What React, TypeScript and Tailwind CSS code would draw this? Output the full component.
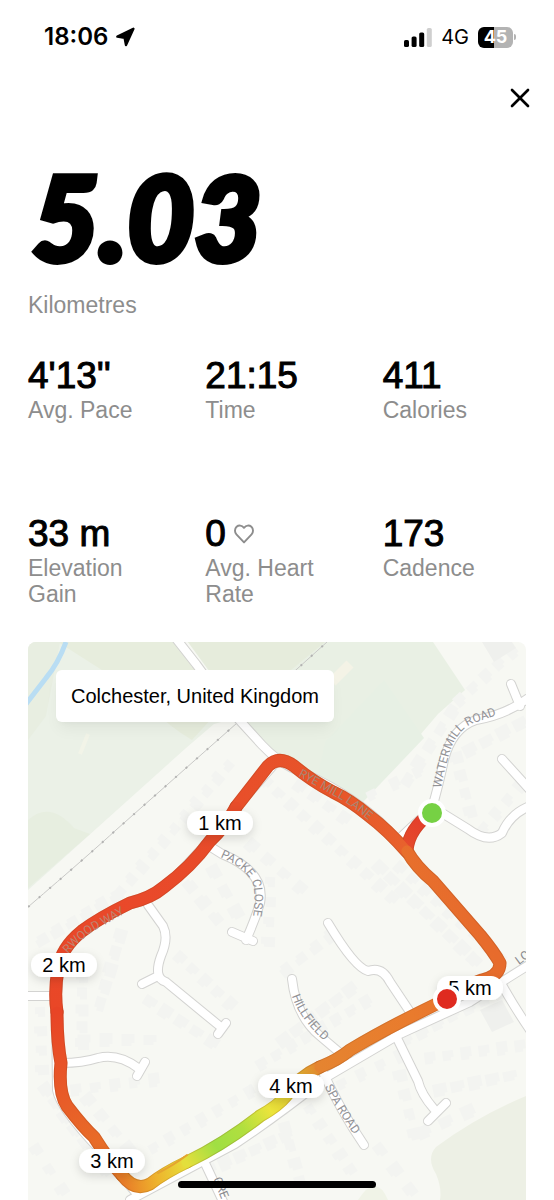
import { X } from "lucide-react";

interface Stat {
  value: string;
  label: string;
  heart?: boolean;
}

const STATS: Stat[] = [
  { value: "4'13''", label: "Avg. Pace" },
  { value: "21:15", label: "Time" },
  { value: "411", label: "Calories" },
  { value: "33 m", label: "Elevation Gain" },
  { value: "0", label: "Avg. Heart Rate", heart: true },
  { value: "173", label: "Cadence" },
];

const ROADS = [
  "M174 636 L196 664 Q228 708 242 723 L262 745 Q276 760 292 768 Q345 790 380 822 L408 851",
  "M278 760 L232 812 Q205 848 166 886 Q150 900 128 905 Q70 934 60 960 L56 1005 L57 1090 Q60 1108 100 1150 L137 1194",
  "M130 1200 L235 1144 Q280 1114 325 1078 L400 1034 L470 1002 Q520 970 560 946",
  "M396 842 Q412 826 424 816 M432 808 Q438 788 444 760 Q452 728 476 720 Q505 715 527 699 M511 684 L520 706",
  "M434 808 L468 829 Q488 844 502 833 Q510 814 530 806",
  "M502 759 L530 790",
  "M206 844 L222 854 Q266 872 260 903 Q255 920 246 940 M232 932 L253 941",
  "M148 905 L163 926 Q169 938 161 956 Q153 978 166 982 L222 1028 M226 1023 L218 1034 M142 984 L158 976",
  "M28 996 L56 996",
  "M62 1063 Q82 1063 98 1058 Q118 1053 138 1068 M145 1062 L137 1076",
  "M328 923 Q355 968 368 971 Q382 966 390 982 L410 1012",
  "M292 979 Q296 1016 320 1036 L346 1058",
  "M322 1070 Q340 1110 364 1145",
  "M394 1032 L418 1081 Q421 1094 434 1109 M428 1121 L446 1103",
  "M502 985 Q515 1008 530 1030",
  "M203 1159 L228 1212",
];

// Each row of houses runs from (x1, y1) to (x2, y2)
const HOUSE_ROWS = [
  [228, 766, 120, 892],
  [116, 896, 42, 940],
  [266, 782, 392, 898],
  [214, 872, 236, 912],
  [252, 846, 300, 888],
  [270, 882, 268, 942],
  [216, 918, 190, 886],
  [400, 868, 500, 958],
  [380, 868, 474, 960],
  [300, 786, 344, 818],
  [372, 795, 418, 772],
  [408, 780, 452, 712],
  [460, 700, 512, 652],
  [470, 750, 520, 724],
  [456, 758, 470, 812],
  [484, 828, 520, 786],
  [150, 1002, 212, 1042],
  [180, 958, 230, 1004],
  [120, 936, 100, 1004],
  [82, 960, 82, 1044],
  [40, 1012, 42, 1070],
  [84, 1040, 150, 1040],
  [76, 1090, 154, 1080],
  [46, 1090, 104, 1170],
  [88, 1100, 128, 1148],
  [154, 1148, 250, 1092],
  [210, 1170, 286, 1136],
  [262, 1064, 366, 1002],
  [284, 1040, 350, 990],
  [330, 936, 286, 970],
  [342, 1084, 400, 1056],
  [406, 1040, 500, 992],
  [430, 1058, 520, 1046],
  [440, 1090, 510, 1076],
  [400, 1076, 414, 1134],
  [310, 1110, 350, 1170],
  [380, 1150, 410, 1190],
  [36, 1150, 62, 1190],
  [424, 1132, 468, 1112],
  [280, 1110, 300, 1182],
];

const STREETS = [
  { id: "watermill", name: "WATERMILL ROAD", d: "M441 788 Q444 772 450 752 Q457 730 474 723 L512 710", color: "#929296" },
  { id: "rye", name: "RYE MILL LANE", d: "M298 776 L340 799 Q360 811 386 836", color: "#a98572" },
  { id: "packe", name: "PACKE CLOSE", d: "M220 857 Q246 868 253 884 Q257 900 251 928", color: "#929296" },
  { id: "wood", name: "RWOOD WAY", d: "M68 954 Q84 935 101 927 L136 907", color: "#c08470" },
  { id: "hillfield", name: "HILLFIELD", d: "M292 996 Q300 1022 335 1050", color: "#929296" },
  { id: "spa", name: "SPA ROAD", d: "M325 1087 Q336 1110 362 1146", color: "#929296" },
  { id: "london", name: "LO", d: "M519 965 L550 942", color: "#88888c" },
  { id: "crescent", name: "CRE", d: "M213 1179 L238 1240", color: "#88888c" },
];

// Pace colouring, one gradient for each stretch of the run
const LEGS = [
  {
    id: "start",
    d: "M431 813 Q409 829 407 850",
    box: [431, 813, 407, 850],
    stops: ["#e43a2b", "#e54c2c"],
  },
  {
    id: "lane",
    d: "M407 852 Q388 830 368 815 Q350 800 333 792 Q312 781 294 766 Q279 755 268 766 Q250 789 236 807",
    box: [407, 852, 236, 807],
    stops: ["#e8622d", "#e75529", "#e84f2a"],
  },
  {
    id: "way",
    d: "M236 807 Q226 826 210 841 Q191 867 164 887 Q151 898 130 903 Q99 918 82 931 Q61 948 58 969 Q54 992 57 1012",
    box: [236, 807, 57, 1012],
    stops: ["#e74c29", "#e9492a", "#e94727"],
  },
  {
    id: "west",
    d: "M57 1012 Q57 1042 61 1063 Q58 1092 67 1106 Q83 1127 94 1137 Q109 1161 122 1175",
    box: [57, 1012, 122, 1175],
    stops: ["#e84426", "#e85d28", "#e97827"],
  },
  {
    id: "corner",
    d: "M122 1175 Q135 1192 150 1184 Q164 1173 187 1162",
    box: [122, 1175, 187, 1162],
    stops: ["#e97d28", "#eeb32c", "#e6df3c"],
  },
  {
    id: "spa-west",
    d: "M187 1162 Q224 1144 260 1116 Q278 1106 286 1096 Q298 1077 320 1067",
    box: [187, 1162, 320, 1067],
    stops: ["#e3df3c", "#a0df43", "#b1df3f", "#ece43b", "#ddc32f", "#e58430"],
  },
  {
    id: "spa-east",
    d: "M320 1067 Q338 1060 350 1050 Q390 1026 447 999 Q467 985 482 980 Q500 976 500 963 Q494 952 480 935 L433 881 Q416 867 407 851",
    box: [320, 1067, 500, 963],
    stops: ["#e58430", "#e97b2d", "#e76b2c"],
  },
];

const MARKERS = [
  { label: "1 km", x: 220, y: 823 },
  { label: "2 km", x: 64, y: 965 },
  { label: "3 km", x: 112, y: 1161 },
  { label: "4 km", x: 291, y: 1086 },
  { label: "5 km", x: 470, y: 988 },
];

function StatusBar() {
  return (
    <header className="flex h-[74px] items-center justify-between pr-[38px] pl-11 font-['Inter',sans-serif]">
      <div className="flex items-center gap-2">
        <span className="text-[24px] leading-7 font-semibold">18:06</span>
        <svg viewBox="0 0 19 20" className="h-5 w-[19px]" aria-hidden="true">
          <path
            d="M17.4 1.8 L1.4 9.6 L8.6 10.8 L10 18 Z"
            fill="black"
            stroke="black"
            strokeWidth="2.4"
            strokeLinejoin="round"
          />
        </svg>
      </div>
      <div className="flex items-center">
        <svg viewBox="0 0 28 19" className="h-[19px] w-7" aria-hidden="true">
          <rect x="0" y="12" width="5" height="7" rx="1.6" />
          <rect x="7.6" y="8.5" width="5" height="10.5" rx="1.6" />
          <rect x="15.2" y="4.5" width="5" height="14.5" rx="1.6" />
          <rect x="22.8" y="0" width="5" height="19" rx="1.6" fill="#cfcfcf" />
        </svg>
        <span className="ml-[9px] text-[20px] leading-7">4G</span>
        <div className="ml-[9px] flex items-center gap-px">
          <span className="flex h-[21px] w-[35px] items-center justify-center rounded-md bg-linear-to-r from-black from-45% to-[#b3b3b3] to-45% text-[18px] leading-5 font-bold text-white">
            45
          </span>
          <span className="h-[6px] w-[2px] rounded-r-full bg-[#b3b3b3]" />
        </div>
      </div>
    </header>
  );
}

function StatItem({ value, label, heart }: Stat) {
  return (
    <div>
      <dd className="flex items-center gap-2 text-[37px] leading-10 [-webkit-text-stroke:1px_black]">
        {value}
        {heart && (
          <svg viewBox="0 0 20 20" className="h-5 w-5" aria-hidden="true">
            <path
              d="M10 18.4 L2.4 10.3 C0.4 8.2 0.6 4.7 2.6 2.8 C4.8 0.9 7.8 1.1 10 3.8 C12.2 1.1 15.2 0.9 17.4 2.8 C19.4 4.7 19.6 8.2 17.6 10.3 Z"
              fill="none"
              stroke="#8d8d8d"
              strokeWidth="1.9"
              strokeLinejoin="round"
            />
          </svg>
        )}
      </dd>
      <dt className="mt-px pr-4 text-[23px] leading-[26px] text-[#8d8d8d]">{label}</dt>
    </div>
  );
}

function Houses() {
  return (
    <g fill="#f3f4f1">
      {HOUSE_ROWS.map(([x1, y1, x2, y2], row) => {
        const length = Math.hypot(x2 - x1, y2 - y1);
        const count = Math.max(2, Math.round(length / 15));
        const angle = (Math.atan2(y2 - y1, x2 - x1) * 180) / Math.PI;
        return Array.from({ length: count }, (_, i) => {
          const t = i / (count - 1);
          const w = 10 + ((i * 5 + row * 3) % 5);
          const h = 10 + ((i * 3 + row) % 5);
          const x = x1 + (x2 - x1) * t;
          const y = y1 + (y2 - y1) * t;
          return (
            <path
              key={`${row}-${i}`}
              d={`M${-w / 2} ${-h / 2} h${w} v${h - 3} h-3 v3 h${3 - w} z`}
              transform={`translate(${x} ${y}) rotate(${angle})`}
            />
          );
        });
      })}
    </g>
  );
}

function RouteMap() {
  return (
    <svg
      viewBox="28 642 498 558"
      className="block w-full"
      role="img"
      aria-label="Map of the run"
    >
      <defs>
        {LEGS.map(({ id, box, stops }) => (
          <linearGradient
            key={id}
            id={id}
            gradientUnits="userSpaceOnUse"
            x1={box[0]}
            y1={box[1]}
            x2={box[2]}
            y2={box[3]}
          >
            {stops.map((color, i) => (
              <stop key={i} offset={i / (stops.length - 1)} stopColor={color} />
            ))}
          </linearGradient>
        ))}
        {STREETS.map(({ id, d }) => (
          <path key={id} id={`street-${id}`} d={d} />
        ))}
        <filter id="pill-shadow" x="-30%" y="-60%" width="160%" height="240%">
          <feDropShadow dx="0" dy="3" stdDeviation="5" floodOpacity="0.14" />
        </filter>
      </defs>

      <rect x="28" y="642" width="498" height="558" fill="#f7f8f3" />

      {/* fields */}
      <path d="M28 642 H178 L236 718 L214 724 L186 748 L28 890 Z" fill="#ebf1e7" />
      <path d="M58 642 H178 L224 705 L192 740 Q168 726 150 706 L105 672 Z" fill="#e7eddd" />
      <path d="M28 642 H60 L46 716 L28 740 Z" fill="#e8eee1" />
      <path d="M28 820 Q50 800 74 828 L90 834 L28 888 Z" fill="#e7eee0" />
      <path d="M188 642 H433 L465 690 L438 714 L362 803 L298 768 Q262 744 250 728 Z" fill="#e9f0e4" />
      <path d="M188 642 H325 L240 712 Z" fill="#e6ecdc" />
      <path d="M384 680 L424 738 L362 803 L318 775 L325 742 Z" fill="#e7f0e4" />
      <path d="M526 1096 Q478 1116 436 1147 Q426 1158 436 1174 Q442 1188 440 1200 H526 Z" fill="#edf0e5" />
      <path d="M358 1200 Q376 1172 388 1200 Z" fill="#f0f3e7" />
      <path d="M66 642 Q58 664 46 678 L26 704" fill="none" stroke="#b9ddf3" strokeWidth="5" />
      <path d="M88 734 L80 754" stroke="#f2f4e8" strokeWidth="4" />
      <path d="M332 682 L350 664" stroke="#f4f3e6" strokeWidth="10" />

      <Houses />
      <path d="M482 642 L494 662 L516 648 L512 642 Z" fill="#eff0ed" />
      <path d="M480 1010 L502 1000 L514 1022 L492 1032 Z" fill="#eff0ed" />

      <path
        d="M28 907 Q92 852 116 830 L237 723 L327 642"
        fill="none"
        stroke="#c9c9c7"
        strokeWidth="1"
      />
      <path
        d="M28 907 Q92 852 116 830 L237 723 L327 642"
        fill="none"
        stroke="#b3b3b2"
        strokeWidth="2"
        strokeDasharray="2 12"
      />

      <g fill="none" strokeLinecap="round" strokeLinejoin="round">
        {ROADS.map((d) => (
          <path key={d} d={d} stroke="#d3d3d1" strokeWidth="10" />
        ))}
        {ROADS.map((d) => (
          <path key={d} d={d} stroke="white" strokeWidth="8" />
        ))}
        {LEGS.map(({ id, d }) => (
          <path key={id} d={d} stroke={`url(#${id})`} strokeWidth="13" />
        ))}
        {LEGS.map(({ id, d }) => (
          <path key={id} d={d} stroke="#7d3d12" strokeOpacity="0.2" strokeWidth="13" />
        ))}
        {LEGS.map(({ id, d }) => (
          <path key={id} d={d} stroke={`url(#${id})`} strokeWidth="11" />
        ))}
        <path d="M158 1173 Q174 1165 187 1155" stroke="#e5a42f" strokeWidth="2" />
      </g>

      <g className="font-['Roboto',sans-serif] text-[12px]">
        {STREETS.map(({ id, name, color }) => (
          <text key={id} fill={color}>
            <textPath href={`#street-${id}`}>{name}</textPath>
          </text>
        ))}
      </g>

      {MARKERS.map(({ label, x, y }) => (
        <g key={label}>
          <rect
            x={x - 33}
            y={y - 12}
            width="66"
            height="24"
            rx="12"
            fill="white"
            filter="url(#pill-shadow)"
          />
          <text x={x} y={y + 7} textAnchor="middle" className="text-[20px]">
            {label}
          </text>
        </g>
      ))}

      <circle cx="432" cy="813" r="12" fill="#76d144" stroke="white" strokeWidth="4" />
      <circle cx="447" cy="999" r="12" fill="#df2b20" stroke="white" strokeWidth="4" />
    </svg>
  );
}

export default function App() {
  return (
    <div className="min-h-screen bg-white font-['Liberation_Sans',Arial,sans-serif] text-black">
      <StatusBar />
      <div className="flex justify-end pr-[18px]">
        <button type="button" aria-label="Close" className="flex h-12 w-8 items-center justify-center">
          <X className="h-8 w-8" strokeWidth={2} />
        </button>
      </div>

      <main className="px-7">
        <h1 className="mt-7 pl-1 font-['Lato',sans-serif] text-[116px] leading-[134px] font-black italic [-webkit-text-stroke:6px_black]">
          5.03
        </h1>
        <p className="mt-2 text-[23px] leading-[26px] text-[#8d8d8d]">Kilometres</p>

        <dl className="mt-[38px] grid grid-cols-3 gap-x-[34px] gap-y-[91px]">
          {STATS.map((stat) => (
            <StatItem key={stat.label} {...stat} />
          ))}
        </dl>

        <section className="relative mt-[35px] overflow-hidden rounded-t-lg">
          <RouteMap />
          <p className="absolute top-7 left-7 rounded-md bg-white px-[15px] py-3 text-[20px] leading-7 shadow-lg shadow-black/5">
            Colchester, United Kingdom
          </p>
        </section>
      </main>

      <div className="fixed bottom-3 left-1/2 h-[7px] w-[198px] -translate-x-1/2 rounded-full bg-black" />
    </div>
  );
}
